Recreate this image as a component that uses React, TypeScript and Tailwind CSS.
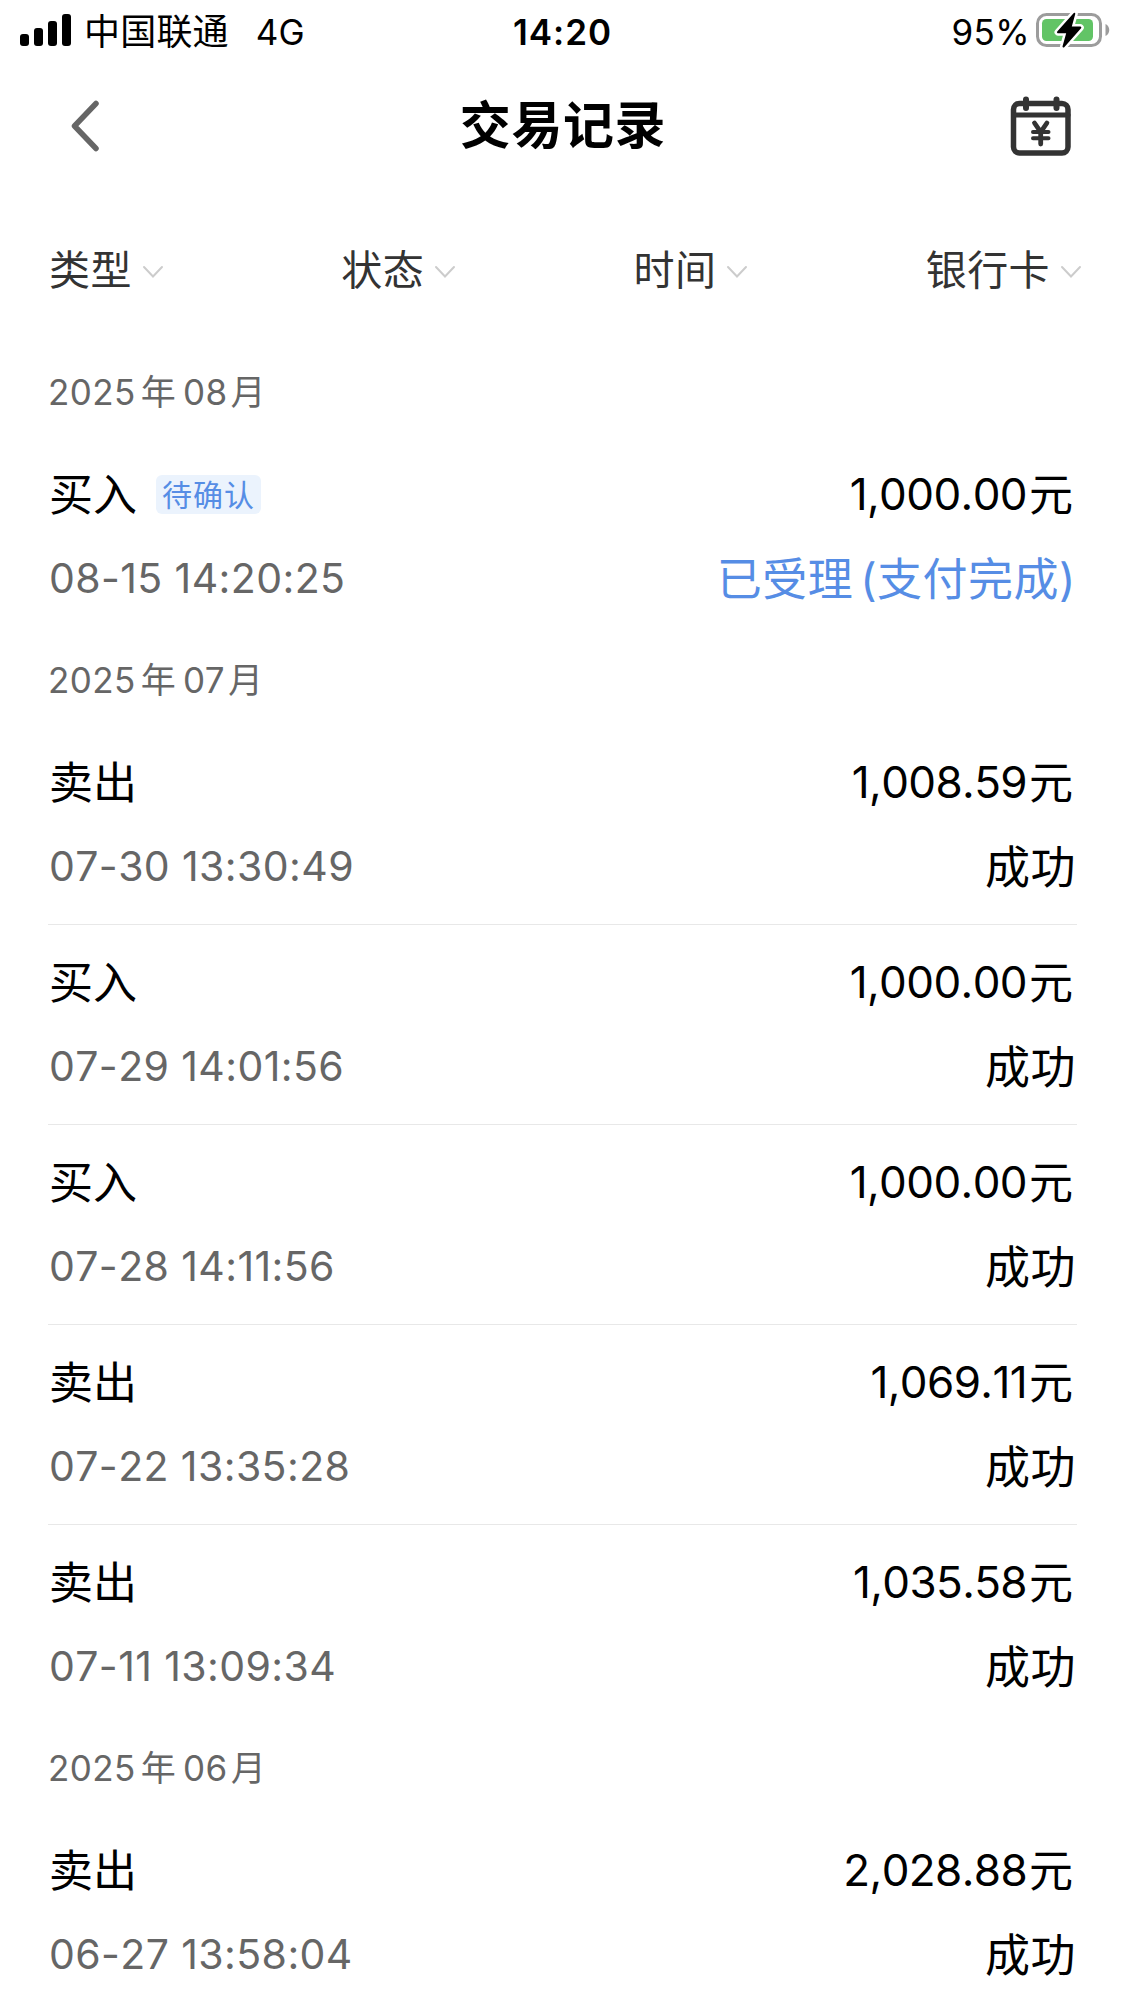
import React from 'react';

type Transaction = {
  id: string;
  kind: '买入' | '卖出';
  time: string;
  amount: string;
  status: string;
  note?: string;
  tag?: string;
};

type MonthGroup = {
  year: string;
  month: string;
  items: Transaction[];
};

const filters = ['类型', '状态', '时间', '银行卡'];

const groups: MonthGroup[] = [
  {
    year: '2025',
    month: '08',
    items: [
      { id: '1', kind: '买入', time: '08-15 14:20:25', amount: '1,000.00', status: '已受理', note: '(支付完成)', tag: '待确认' },
    ],
  },
  {
    year: '2025',
    month: '07',
    items: [
      { id: '2', kind: '卖出', time: '07-30 13:30:49', amount: '1,008.59', status: '成功' },
      { id: '3', kind: '买入', time: '07-29 14:01:56', amount: '1,000.00', status: '成功' },
      { id: '4', kind: '买入', time: '07-28 14:11:56', amount: '1,000.00', status: '成功' },
      { id: '5', kind: '卖出', time: '07-22 13:35:28', amount: '1,069.11', status: '成功' },
      { id: '6', kind: '卖出', time: '07-11 13:09:34', amount: '1,035.58', status: '成功' },
    ],
  },
  {
    year: '2025',
    month: '06',
    items: [
      { id: '7', kind: '卖出', time: '06-27 13:58:04', amount: '2,028.88', status: '成功' },
    ],
  },
];

export default function App() {
  return (
    <div className="h-[2001px] w-[1125px] overflow-hidden bg-white font-['Inter','Noto_Sans_CJK_SC',sans-serif] text-black">
      <StatusBar />
      <NavBar />
      <FilterBar />
      {groups.map(group => (
        <MonthSection key={group.month} group={group} />
      ))}
    </div>
  );
}

function StatusBar() {
  return (
    <div className="grid h-[62px] grid-cols-3 items-center pl-5 pr-[15px] text-[35px] leading-none">
      <div className="flex items-center">
        <svg width="51" height="32" viewBox="0 0 51 32" className="-mt-0.5">
          <rect x="0" y="20" width="9" height="12" rx="3" />
          <rect x="14" y="14" width="9" height="18" rx="3" />
          <rect x="28" y="7" width="9" height="25" rx="3" />
          <rect x="42" y="0" width="9" height="32" rx="3" />
        </svg>
        <span className="ml-[13px] pt-0.5 text-[36px] tracking-[0.2px]">中国联通</span>
        <span className="ml-[27px] pt-0.5">4G</span>
      </div>
      <div className="pr-[5px] pt-0.5 text-center font-semibold tracking-[1px]">14:20</div>
      <div className="flex items-center justify-end">
        <span className="mr-1.5 pt-0.5 tracking-[0.4px]">95%</span>
        <BatteryIcon />
      </div>
    </div>
  );
}

function BatteryIcon() {
  return (
    <svg width="74" height="38" viewBox="0 0 74 38" className="-mt-0.5">
      <rect x="1.5" y="3.5" width="63" height="31" rx="9" fill="none" stroke="#9c9c9c" strokeWidth="3" />
      <rect x="6" y="8" width="51" height="22" rx="4.5" fill="#62c466" />
      <path d="M69.5 13c5 2 5 10 0 12z" fill="#9c9c9c" />
      <path
        d="M38.3 2.8 22 21.2h9.5L27.5 35.5 44.3 16.6h-9.8z"
        fill="#000"
        stroke="#fff"
        strokeWidth="7"
        strokeLinejoin="round"
        paintOrder="stroke"
      />
      <path d="M38.3 2.8 22 21.2h9.5L27.5 35.5 44.3 16.6h-9.8z" stroke="#000" strokeWidth="2" strokeLinejoin="round" />
    </svg>
  );
}

function NavBar() {
  return (
    <div className="grid h-[127px] grid-cols-3 items-center pl-[70px] pr-[53px]">
      <button className="justify-self-start">
        <svg width="30" height="52" viewBox="0 0 30 52" fill="none" stroke="#666" strokeWidth="5.5" strokeLinecap="round" strokeLinejoin="round">
          <path d="M26 3.5 4.5 26 26 48.5" />
        </svg>
      </button>
      <h1 className="-ml-4 text-center text-[51px] font-semibold leading-none tracking-[0.6px]">交易记录</h1>
      <button className="justify-self-end">
        <CalendarYuanIcon />
      </button>
    </div>
  );
}

function CalendarYuanIcon() {
  return (
    <svg width="62" height="62" viewBox="0 0 62 62" fill="none" stroke="#333" strokeWidth="5.5" strokeLinecap="round">
      <rect x="3.5" y="8.5" width="54.5" height="49.5" rx="6" />
      <path d="M3.5 20H58" strokeWidth="5" />
      <path d="M16 4.5V13M46.5 4.5V13" strokeWidth="6" />
      <path d="m24.5 28 6.2 9 6.2-9M30.7 37v12" strokeWidth="4.8" />
      <path d="M23 37h15.5M23 43.2h15.5" strokeWidth="4" />
    </svg>
  );
}

function FilterBar() {
  return (
    <div className="flex h-[160px] items-center justify-between pl-[49px] pr-[43px]">
      {filters.map(label => (
        <button key={label} className="flex items-center text-[41px] leading-none text-[#333]">
          <span className="pt-[3px] tracking-[0.4px]">{label}</span>
          <svg width="22" height="14" viewBox="0 0 22 14" className="ml-2.5 mt-[5px]" fill="none" stroke="#ccc" strokeWidth="2" strokeLinecap="round">
            <path d="m2 2 9 9.5L20 2" />
          </svg>
        </button>
      ))}
    </div>
  );
}

function MonthSection({ group }: { group: MonthGroup }) {
  return (
    <section className="px-12">
      <div className="flex h-[88px] items-center pb-0.5 text-[35px] leading-none tracking-[0.4px] text-[#666]">
        <span>{group.year}</span>
        <span className="ml-[5px] pt-px">年</span>
        <span className="ml-[7px]">{group.month}</span>
        <span className="ml-[3px] pt-px">月</span>
      </div>
      {group.items.map((item, i) => (
        <TransactionRow key={item.id} item={item} last={i === group.items.length - 1} />
      ))}
    </section>
  );
}

function TransactionRow({ item, last }: { item: Transaction, last: boolean }) {
  return (
    <div className={`h-[200px] border-b pt-[15px] leading-none ${last ? 'border-transparent' : 'border-[#e8e8e8]'}`}>
      <div className="flex h-[84px] items-center justify-between">
        <div className="flex items-center pl-px">
          <span className="pt-0.5 text-[44px]">{item.kind}</span>
          {item.tag && (
            <span className="ml-[19px] flex h-[39px] items-center rounded-md bg-[#ebf3fd] px-1.5 pt-0.5 text-[30px] tracking-[1px] text-[#568de5]">
              {item.tag}
            </span>
          )}
        </div>
        <div className="flex items-center pr-1">
          <span className="mr-0.5 text-[44px] tracking-[-0.6px] [font-kerning:none]">{item.amount}</span>
          <span className="pt-0.5 text-[44px]">元</span>
        </div>
      </div>
      <div className="flex h-[84px] items-center justify-between">
        <span className="pl-px pt-px text-[41px] tracking-[0.4px] text-[#666] [font-kerning:none]">{item.time}</span>
        <div className={`flex gap-[7px] pr-px pt-0.5 text-[45px] tracking-[0.5px] ${item.tag ? 'text-[#568de5]' : ''}`}>
          <span>{item.status}</span>
          {item.note && <span>{item.note}</span>}
        </div>
      </div>
    </div>
  );
}
